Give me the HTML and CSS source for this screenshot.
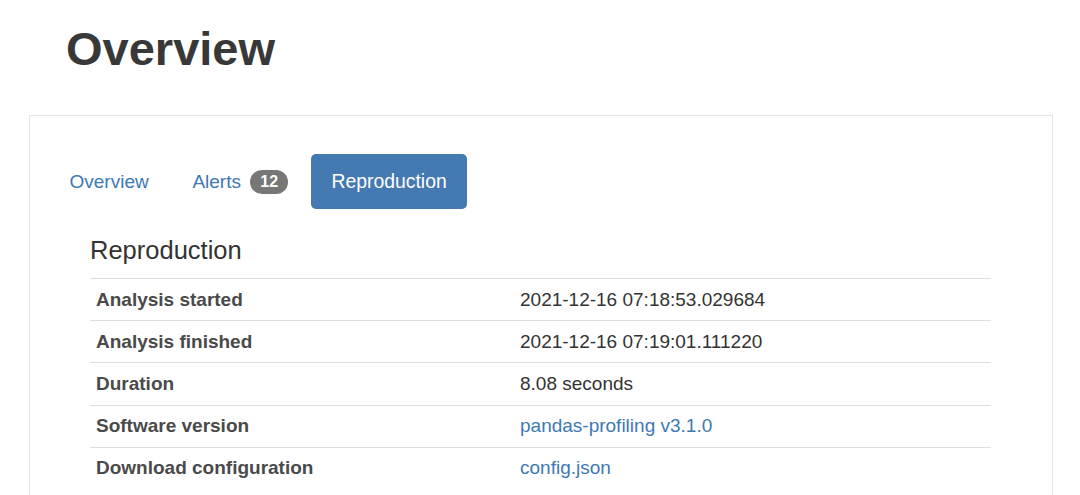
FILE: index.html
```html
<!DOCTYPE html>
<html lang="en">
<head>
<meta charset="utf-8">
<title>Overview</title>
<link rel="stylesheet" href="styles.css">
</head>
<body>
<div class="page">
  <h1 class="page-title">Overview</h1>
  <div class="panel">
    <ul class="nav">
      <li class="nav-item"><a class="nav-link" href="#">Overview</a></li>
      <li class="nav-item"><a class="nav-link" href="#">Alerts <span class="badge">12</span></a></li>
      <li class="nav-item"><a class="nav-link active" href="#">Reproduction</a></li>
    </ul>
    <div class="tab-content">
      <h4 class="section-title">Reproduction</h4>
      <table class="info-table">
        <tbody>
          <tr><th>Analysis started</th><td>2021-12-16 07:18:53.029684</td></tr>
          <tr><th>Analysis finished</th><td>2021-12-16 07:19:01.111220</td></tr>
          <tr><th>Duration</th><td>8.08 seconds</td></tr>
          <tr><th>Software version</th><td><a class="link" href="#">pandas-profiling v3.1.0</a></td></tr>
          <tr><th>Download configuration</th><td><a class="link" href="#">config.json</a></td></tr>
        </tbody>
      </table>
    </div>
  </div>
</div>
</body>
</html>
```
FILE: styles.css
```css
html, body {
  margin: 0;
  padding: 0;
  background: #fff;
}
body {
  font-family: "Liberation Sans", Arial, Helvetica, sans-serif;
  font-size: 19px;
  line-height: 26.7px;
  color: #333;
  overflow: hidden;
}
.page {
  padding: 0 0 0 29px;
}
.page-title {
  margin: 21px 0 0 37px;
  font-size: 47px;
  line-height: 56px;
  font-weight: bold;
  color: #383838;
}
.panel {
  margin-top: 38px;
  width: 1024px;
  box-sizing: border-box;
  border: 1px solid #e4e4ea;
  border-bottom: none;
  padding: 38px 0 40px 19px;
  min-height: 420px;
}
.nav {
  list-style: none;
  margin: 0;
  padding: 0;
  display: flex;
  gap: 2.7px;
}
.nav-link {
  display: block;
  padding: 14px 20.5px;
  line-height: 27px;
  color: #3d79b5;
  text-decoration: none;
  border-radius: 5px;
}
.nav-link.active {
  background: #4579b2;
  color: #fff;
  padding: 14px 20.2px;
  font-size: 19.4px;
}
.badge {
  display: inline-block;
  min-width: 13px;
  padding: 4px 10px;
  font-size: 16px;
  font-weight: bold;
  line-height: 16px;
  color: #fff;
  text-align: center;
  white-space: nowrap;
  vertical-align: middle;
  background: #777;
  border-radius: 12px;
  margin-left: 4px;
  position: relative;
  top: -1px;
}
.tab-content {
  padding: 0 41px;
}
.section-title {
  margin: 26px 0 0 0;
  font-size: 25.5px;
  line-height: 30px;
  font-weight: 500;
  color: #333;
  padding-bottom: 13px;
}
.info-table {
  width: 901px;
  border-collapse: collapse;
  border-spacing: 0;
}
.info-table th,
.info-table td {
  border-top: 1.4px solid #ddd;
  padding: 7.6px 6px 7.6px 6px;
  line-height: 26px;
  text-align: left;
  vertical-align: top;
}
.info-table th {
  width: 412px;
  font-weight: bold;
  color: #4a4a4a;
}
.info-table td {
  color: #333;
}
.link {
  color: #3d79b5;
  text-decoration: none;
}
```
